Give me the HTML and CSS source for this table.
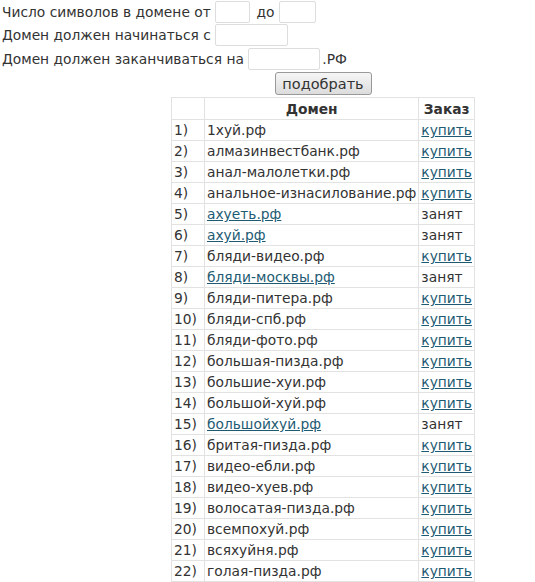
FILE: index.html
```html
<!DOCTYPE html>
<html lang="ru">
<head>
<meta charset="utf-8">
<link rel="stylesheet" href="styles.css">
</head>
<body>
<form class="filter">
  <div class="line">Число символов в домене от <input class="inp short" type="text"> до <input class="inp short2" type="text"></div>
  <div class="line">Домен должен начинаться с <input class="inp mid" type="text"></div>
  <div class="line last">Домен должен заканчиваться на <input class="inp mid2" type="text">.РФ</div>
  <div class="result">
    <button class="btn" type="button">подобрать</button>
    <table class="list">
      <tr><th class="num"></th><th class="dom">Домен</th><th class="ord">Заказ</th></tr>
      <tr><td>1)</td><td>1хуй.рф</td><td><a href="#">купить</a></td></tr>
      <tr><td>2)</td><td>алмазинвестбанк.рф</td><td><a href="#">купить</a></td></tr>
      <tr><td>3)</td><td>анал-малолетки.рф</td><td><a href="#">купить</a></td></tr>
      <tr><td>4)</td><td>анальное-изнасилование.рф</td><td><a href="#">купить</a></td></tr>
      <tr><td>5)</td><td><a href="#">ахуеть.рф</a></td><td>занят</td></tr>
      <tr><td>6)</td><td><a href="#">ахуй.рф</a></td><td>занят</td></tr>
      <tr><td>7)</td><td>бляди-видео.рф</td><td><a href="#">купить</a></td></tr>
      <tr><td>8)</td><td><a href="#">бляди-москвы.рф</a></td><td>занят</td></tr>
      <tr><td>9)</td><td>бляди-питера.рф</td><td><a href="#">купить</a></td></tr>
      <tr><td>10)</td><td>бляди-спб.рф</td><td><a href="#">купить</a></td></tr>
      <tr><td>11)</td><td>бляди-фото.рф</td><td><a href="#">купить</a></td></tr>
      <tr><td>12)</td><td>большая-пизда.рф</td><td><a href="#">купить</a></td></tr>
      <tr><td>13)</td><td>большие-хуи.рф</td><td><a href="#">купить</a></td></tr>
      <tr><td>14)</td><td>большой-хуй.рф</td><td><a href="#">купить</a></td></tr>
      <tr><td>15)</td><td><a href="#">большойхуй.рф</a></td><td>занят</td></tr>
      <tr><td>16)</td><td>бритая-пизда.рф</td><td><a href="#">купить</a></td></tr>
      <tr><td>17)</td><td>видео-ебли.рф</td><td><a href="#">купить</a></td></tr>
      <tr><td>18)</td><td>видео-хуев.рф</td><td><a href="#">купить</a></td></tr>
      <tr><td>19)</td><td>волосатая-пизда.рф</td><td><a href="#">купить</a></td></tr>
      <tr><td>20)</td><td>всемпохуй.рф</td><td><a href="#">купить</a></td></tr>
      <tr><td>21)</td><td>всяхуйня.рф</td><td><a href="#">купить</a></td></tr>
      <tr><td>22)</td><td>голая-пизда.рф</td><td><a href="#">купить</a></td></tr>
      <tr class="tail"><td></td><td></td><td></td></tr>
    </table>
  </div>
</form>
</body>
</html>
```
FILE: styles.css
```css
html, body {
  margin: 0;
  padding: 0;
  background: #fff;
}
body {
  font-family: "DejaVu Sans", Verdana, sans-serif;
  font-size: 13.8px;
  color: #333;
}
.filter {
  padding-left: 2px;
}
.line {
  height: 23px;
  display: flex;
  align-items: center;
  white-space: pre;
}
.line.last {
  height: 25px;
}
.inp {
  box-sizing: border-box;
  height: 22px;
  border: 1px solid #ddd;
  border-radius: 2px;
  margin: 0 2px 0 0;
  padding: 0;
  font: inherit;
}
.short { width: 35px; }
.short2 { width: 37px; }
.mid { width: 73px; }
.mid2 { width: 72px; }
.result {
  display: flex;
  flex-direction: column;
  align-items: center;
  width: 304px;
  margin-left: 169px;
}
.btn {
  font: inherit;
  font-size: 14.5px;
  color: #333;
  height: 23px;
  width: 97px;
  padding: 0;
  border: 1px solid #999;
  border-radius: 3px;
  background: linear-gradient(#f6f6f6, #dcdcdc);
  margin-top: 1px;
  margin-bottom: 2px;
}
.list {
  border-collapse: collapse;
  width: 304px;
}
.list th, .list td {
  border: 1px solid #e2e2e2;
  padding: 0 2px;
  height: 20px;
  text-align: left;
  white-space: nowrap;
}
.list th {
  font-weight: bold;
  text-align: center;
  height: 21px;
}
.list th.num { width: 30px; }
.list a {
  color: #1e5b73;
}
```
